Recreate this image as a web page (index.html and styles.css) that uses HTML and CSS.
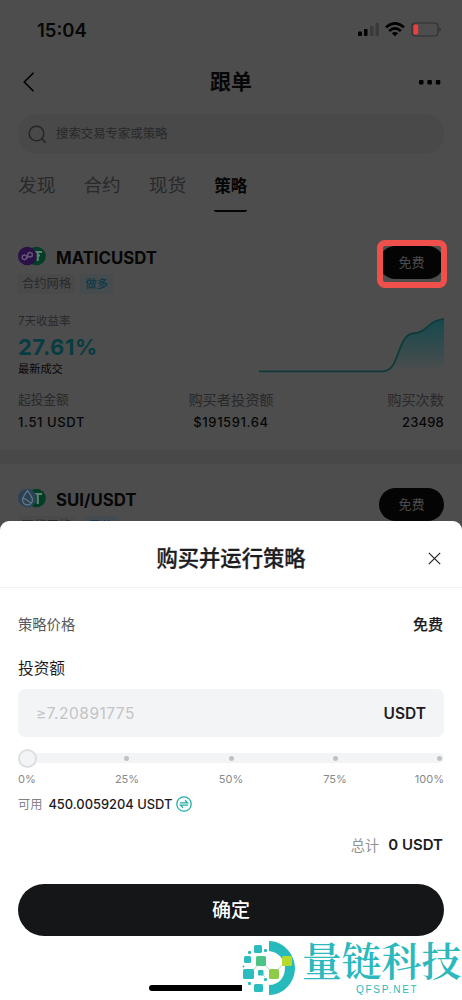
FILE: index.html
```html
<!DOCTYPE html>
<html lang="zh-CN">
<head>
<meta charset="utf-8">
<title>跟单</title>
<link rel="stylesheet" href="styles.css">
</head>
<body>
<div class="screen">
  <div class="status">
    <span class="time">15:04</span>
    <svg width="84" height="16" viewBox="0 0 84 16">
      <rect x="0" y="9.5" width="4" height="4.5" rx="1"/><rect x="6" y="7" width="3.5" height="7" rx="1"/>
      <rect x="12" y="4" width="3.5" height="10" rx="1" fill="#3a3a3a"/><rect x="17.500" y="1" width="3.500" height="13" rx="1" fill="#3a3a3a"/>
      <g fill="none" stroke="#000" stroke-width="2.600"><path d="M28 5.200Q37 -2.600 46 5.200"/><path d="M31.200 8.900Q37 4 42.800 8.900"/></g>
      <path d="M33.800 11.200Q37 8.700 40.200 11.200L37 14.300Z"/>
      <rect x="54" y="1" width="26" height="13" rx="3.500" fill="none" stroke="#303030" stroke-width="1.200"/>
      <rect x="55.400" y="2.500" width="4.800" height="10" rx="1.500" fill="#ed403c"/><path d="M81.500 5.500q2.400 2 0 4z" fill="#252525"/>
    </svg>
  </div>
  <div class="nav">
    <svg width="12" height="20" viewBox="0 0 12 20"><path d="M10.500 .8 1.300 10l9.200 9.200" fill="none" stroke="#000" stroke-width="1.600"/></svg>
    <h1>跟单</h1>
    <svg width="22" height="6" viewBox="0 0 22 6"><rect y="1" width="4.500" height="4.500" rx="1"/><rect x="8.400" y="1" width="4.500" height="4.500" rx="1"/><rect x="16.800" y="1" width="4.500" height="4.500" rx="1"/></svg>
  </div>
  <div class="search">
    <svg width="19" height="19" viewBox="0 0 19 19" fill="none" stroke="#252525" stroke-width="1.500"><circle cx="8.500" cy="8.500" r="7.300"/><path d="m13.600 13.600 4 4"/></svg>
    <span>搜索交易专家或策略</span>
  </div>
  <div class="tabs"><span>发现</span><span>合约</span><span>现货</span><span class="active">策略</span></div>

  <section class="card">
    <div class="head">
      <div>
        <div class="pair">
          <svg class="coins" width="28" height="20" viewBox="0 0 28 20">
            <circle cx="18.500" cy="10" r="9.300" fill="#043e26"/><path d="M16 6h8M19.800 6v9M17 9.500h5" stroke="#5b8170" stroke-width="2" fill="none"/>
            <circle cx="9.300" cy="10" r="9.300" fill="#2b1048"/>
            <g fill="none" stroke="#665875" stroke-width="1.400"><path d="m6.500 8.800 2 1.200v2.500l-2 1.200-2.200-1.200V10z"/><path d="m12 6.300 2.200 1.200V10L12 11.200 9.800 10V7.500z"/><path d="m8.500 12.500 1.800-2.500"/></g>
          </svg>
          <h2>MATICUSDT</h2>
        </div>
        <div class="tags"><span class="tag">合约网格</span><span class="tag blue">做多</span></div>
      </div>
      <div class="buy">免费<i class="frame"></i></div>
    </div>
    <div class="perf">
      <div>
        <div class="caption">7天收益率</div>
        <div class="rate">27.61%</div>
        <div class="latest">最新成交</div>
      </div>
      <svg width="185" height="60" viewBox="0 0 185 60">
        <defs><linearGradient id="fade" x1="0" y1="0" x2="0" y2="1"><stop offset="0" stop-color="#14494e"/><stop offset="1" stop-color="#4d4d4d"/></linearGradient></defs>
        <path d="M124 55.300C141 55.300 138 19 154 17.500C170 16 168 5 185 2.800V55.300Z" fill="url(#fade)"/>
        <path d="M0 55.300H124C141 55.300 138 19 154 17.500C170 16 168 5 185 2.800" fill="none" stroke="#103b3c" stroke-width="1.800"/>
      </svg>
    </div>
    <div class="facts">
      <div><span class="l1">起投金额</span><b>1.51 USDT</b></div>
      <div><span>购买者投资额</span><b>$191591.64</b></div>
      <div><span>购买次数</span><b class="count">23498</b></div>
    </div>
  </section>
  <section class="card second">
    <div class="head">
      <div>
        <div class="pair">
          <svg class="coins" width="28" height="20" viewBox="0 0 28 20">
            <circle cx="18.500" cy="10" r="9.300" fill="#043e26"/><path d="M16 6h8M19.800 6v10" stroke="#5b8170" stroke-width="2.200" fill="none"/>
            <circle cx="9.300" cy="10" r="9.300" fill="#2a4256"/>
            <path d="M9.500 2.500C7 6.500 4.500 9 4.500 12a5 5 0 0 0 10 0c0-3-2.500-5.500-5-9.500ZM5 11c3-1.500 4 2.500 8.500 4" fill="none" stroke="#66747e" stroke-width="1.300"/>
          </svg>
          <h2>SUI/USDT</h2>
        </div>
        <div class="tags"><span class="tag">现货网格</span><span class="tag blue alt">震荡</span></div>
      </div>
      <div class="buy">免费</div>
    </div>
  </section>
</div>

<div class="sheet">
  <header>
    <h3>购买并运行策略</h3>
    <svg class="close" width="13" height="13" viewBox="0 0 13 13"><path d="m.8.800 11.400 11.400m0-11.400L.8 12.200" stroke="#222" stroke-width="1.200"/></svg>
  </header>
  <div class="row price"><span>策略价格</span><b>免费</b></div>
  <div class="label">投资额</div>
  <div class="input"><span>≥7.20891775</span><b>USDT</b></div>
  <div class="slider"><i class="thumb"></i><i></i><i></i><i></i><i></i></div>
  <div class="scale"><span>0%</span><span>25%</span><span>50%</span><span>75%</span><span>100%</span></div>
  <div class="available"><span>可用</span><b>450.0059204 USDT</b>
    <svg width="16" height="16" viewBox="0 0 16 16" fill="none" stroke="#22aaa8" stroke-width="1.300"><circle cx="8" cy="8" r="7.200"/><path d="M4 6.900h7.500L9 4.300M12 9.200H4.500L7 11.700"/></svg>
  </div>
  <div class="total"><span>总计</span><b>0 USDT</b></div>
  <div class="confirm">确定</div>
  <div class="home"></div>
  <div class="brand">
    <svg width="55" height="56" viewBox="0 0 55 56">
      <path d="M27 1C41 1 53 14 53 28S42 55 27 55V45C37 45 43 37 43 28S36 12 27 11Z" fill="#26babd"/>
      <path d="M19 21 32 34 45 20M19 21 9 33M18 32l5 5" fill="none" stroke="#9cd3a8" stroke-width=".8"/>
      <g fill="#2bbcc0"><rect x="12" y="5" width="8" height="8" rx="1.500"/><rect x="2" y="16" width="7" height="7" rx="1.500"/><rect x="1" y="29" width="11" height="10" rx="1.500"/><rect x="16" y="30" width="5.500" height="5.500" rx="1"/><rect x="12" y="44" width="9" height="8" rx="1.500"/><rect x="22" y="9" width="3" height="3" rx="1"/><rect x="6" y="11" width="3" height="3" rx="1"/><circle cx="1.500" cy="26.500" r="1"/><rect x="6" y="42" width="3" height="3" rx="1"/><rect x="22" y="38" width="3" height="3" rx="1"/></g>
      <rect x="14" y="16" width="10" height="10" rx="1.500" fill="#4dc486"/><rect x="27" y="29" width="10" height="10" rx="1.500" fill="#8fcb4b"/><rect x="40" y="16" width="10" height="10" rx="1.500" fill="#b6d92b"/>
    </svg>
    <div class="words"><strong>量链科技</strong><small>QFSP.NET</small></div>
  </div>
</div>
</body>
</html>
```
FILE: styles.css
```css
* { box-sizing: border-box; }
body { margin: 0; width: 462px; height: 1000px; overflow: hidden; background: #4d4d4d; font-family: Inter, "Noto Sans CJK SC", sans-serif; color: #070708; }
h1, h2, h3 { margin: 0; }
svg { flex: none; display: block; }
.screen { height: 521px; overflow: hidden; }
.status { height: 60px; padding: 0 20px 0 37px; display: flex; align-items: center; justify-content: space-between; }
.time { font-size: 18.500px; font-weight: 600; }
.nav { height: 44px; padding: 0 21px 0 23px; display: grid; grid-template-columns: 80px 1fr 80px; align-items: center; }
.nav h1 { font-size: 21px; line-height: 30px; text-align: center; font-weight: 700; margin-left: -2px; }
.nav svg:last-child { justify-self: end; }
.search { height: 40px; margin: 10px 18px 0; padding: 0 10px; border-radius: 20px; background: #494949; display: flex; align-items: center; gap: 9px; color: #282829; font-size: 12.400px; }
.search span { padding-bottom: 2px; }
.tabs { height: 58px; padding: 18px 18px 0; display: flex; gap: 28px; font-size: 18.700px; line-height: 28px; color: #29292a; }
.tabs .active { height: 40px; font-size: 16.500px; font-weight: 700; color: #050505; border-bottom: 2.500px solid #050505; border-radius: 2px; }
.card { height: 238px; padding: 34px 18px 0; }
.card.second { border-top: 14px solid #484848; height: 90px; padding-top: 24px; }
.head { display: flex; justify-content: space-between; align-items: flex-start; }
.pair { height: 22px; display: flex; align-items: center; gap: 10px; }
.coins { margin-top: -3px; }
.pair h2 { padding-top: 1px; font-size: 16.800px; line-height: 22px; font-weight: 700; }
.tags { margin-top: 6px; display: flex; gap: 5px; }
.tag { height: 20px; padding: 0 4px; background: #4a4a4a; border-radius: 3px; font-size: 12.300px; line-height: 20px; color: #29292a; }
.blue { font-size: 11.500px; padding: 0 5px; font-weight: 500; background: #464b4d; color: #0c3b4a; }
.blue.alt { margin-left: 4px; background: #434b50; color: #0f3050; }
.buy { position: relative; width: 65px; height: 33px; border-radius: 17px; background: #040405; color: #4b4b4b; font-size: 13px; line-height: 33px; text-align: center; }
.frame { position: absolute; left: -2px; top: -6px; width: 70px; height: 48px; border: 6px solid #f0504c; border-radius: 8px; }
.perf { margin-top: 17px; display: flex; justify-content: space-between; align-items: flex-start; }
.perf > svg { margin-top: 5px; }
.caption { font-size: 11.500px; line-height: 20px; color: #28282a; }
.rate { margin: 2px 0 -2px; font-size: 22px; line-height: 28px; font-weight: 700; letter-spacing: .5px; color: #073d42; }
.latest { font-size: 11.200px; line-height: 20px; }
.facts { margin-top: 11px; display: grid; grid-template-columns: 1fr 1fr 1fr; text-align: center; }
.facts div:first-child { text-align: left; }
.facts div:last-child { text-align: right; }
.facts span, .facts b { display: block; }
.facts span { font-size: 14.200px; line-height: 20px; color: #28282a; }
.facts .l1 { font-size: 12.700px; }
.facts b { margin-top: 2px; font-size: 13px; line-height: 20px; font-weight: 500; letter-spacing: .6px; }
.facts .count { letter-spacing: .2px; }
.sheet { position: relative; height: 479px; background: #fff; border-radius: 9px 9px 0 0; color: #1c1c1f; }
.sheet header { position: relative; height: 67px; padding-top: 9px; border-bottom: 1px solid #f2f2f2; display: flex; align-items: center; justify-content: center; }
.sheet h3 { padding-bottom: 1px; font-size: 21.300px; line-height: 30px; font-weight: 500; -webkit-text-stroke: .3px #1c1c1f; }
.close { position: absolute; right: 21px; top: 31px; }
.row { padding: 27px 19px 0 18px; display: flex; justify-content: space-between; font-size: 14.300px; line-height: 20px; color: #58585a; }
.row b { font-size: 15px; font-weight: 500; color: #1c1c1f; -webkit-text-stroke: .2px #1c1c1f; }
.label { margin: 23px 18px 0; font-size: 15.700px; line-height: 22px; }
.input { height: 48px; margin: 9px 18px 0; padding: 0 18px; display: flex; align-items: center; justify-content: space-between; border-radius: 7px; background: #f3f4f6; }
.input span { font-size: 15.500px; letter-spacing: .5px; color: #c3c4c7; }
.input b { font-size: 15.500px; font-weight: 600; }
.slider { height: 10px; margin: 16px 18px 0; padding-right: 2px; background: #f3f4f6; border-radius: 5px; display: flex; justify-content: space-between; align-items: center; }
.slider i { width: 5px; height: 5px; border-radius: 50%; background: #c1c2c5; }
.slider .thumb { width: 19px; height: 19px; border: 2px solid #dedfe2; background: #f3f4f6; margin-right: -12px; }
.scale { margin: 8px 18px 0; display: grid; grid-template-columns: 57px 104px 104px 104px 57px; text-align: center; font-size: 11px; line-height: 16px; color: #88888b; }
.scale span:first-child { text-align: left; }
.scale span:last-child { text-align: right; }
.available { margin: 7px 18px 0; height: 20px; display: flex; align-items: center; font-size: 12.200px; color: #828285; }
.available b { margin: 0 4px 0 6px; font-size: 12.900px; font-weight: 500; color: #1c1c1f; }
.total { height: 22px; margin: 19px 19px 0; display: flex; align-items: center; justify-content: flex-end; gap: 9px; font-size: 14.300px; color: #929295; }
.total b { font-size: 15px; font-weight: 600; color: #1c1c1f; }
.confirm { height: 52px; margin: 29px 18px 0; padding-top: 1px; border-radius: 26px; background: #151618; color: #fff; font-size: 19px; font-weight: 500; line-height: 52px; text-align: center; }
.home { width: 93px; height: 6px; margin: 49px 0 0 149px; border-radius: 3px 0 0 3px; background: #000; }
.brand { position: absolute; left: 242px; top: 419px; width: 220px; display: flex; gap: 5px; color: #2bb9bd; }
.words { display: flex; flex-direction: column; }
.words strong { margin-top: -4px; font-family: "Noto Serif CJK SC", "Noto Sans CJK SC", serif; font-size: 39.800px; line-height: 46px; font-weight: 600; white-space: nowrap; }
.words small { margin: 2px 0 0 54px; font-family: "Liberation Sans", sans-serif; font-size: 10px; line-height: 12px; letter-spacing: 1.700px; }
```
